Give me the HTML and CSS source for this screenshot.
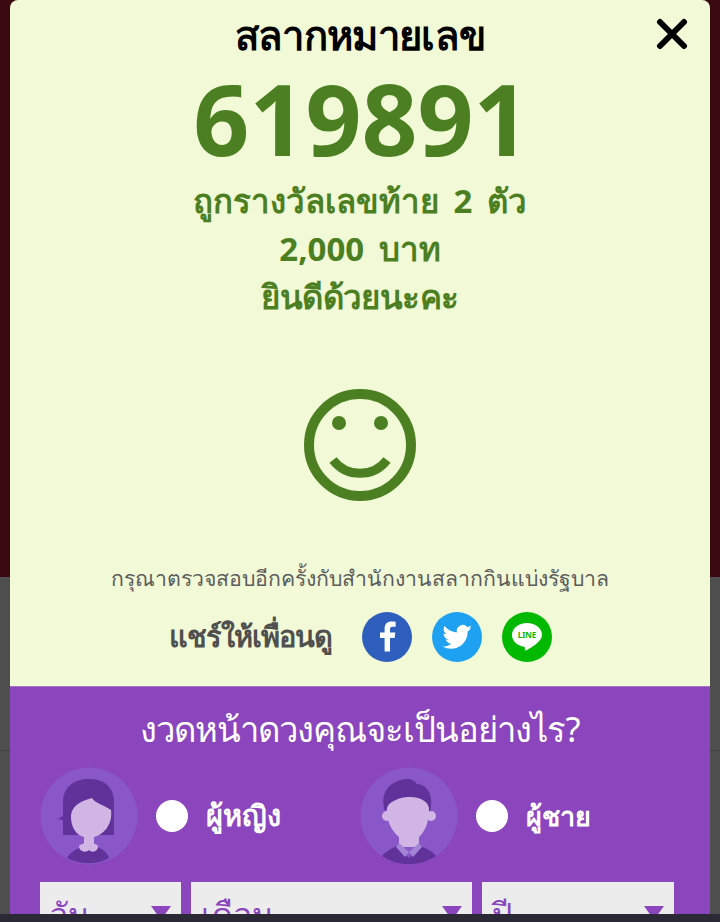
FILE: index.html
```html
<html>
  <head>
    <title>สลากหมายเลข</title>
    <meta charset="utf-8">
    <link rel="stylesheet" href="styles.css">
  </head>
  <body>
    <div class="backdrop">
      <div class="back-top"></div>
      <div class="back-mid"></div>
      <div class="back-low"></div>
    </div>

    <section class="modal">
      <div class="result">
        <button class="close">
          <svg viewBox="0 0 32 32" width="32" height="32" fill="none" stroke="#000" stroke-width="6" stroke-linecap="round">
            <path d="M4 4 28 28M28 4 4 28" />
          </svg>
        </button>
        <h1 class="title">สลากหมายเลข</h1>
        <div class="number">619891</div>
        <p class="prize">ถูกรางวัลเลขท้าย 2 ตัว</p>
        <p class="prize">2,000 บาท</p>
        <p class="prize tight">ยินดีด้วยนะคะ</p>
        <svg class="smile" viewBox="0 0 112 112" width="112" height="112">
          <circle cx="56" cy="56" r="51" fill="none" stroke="#4c7f21" stroke-width="10" />
          <circle cx="35" cy="34" r="7" fill="#4c7f21" />
          <circle cx="77" cy="34" r="7" fill="#4c7f21" />
          <path d="M29 71A34 34 0 0 0 83 71" fill="none" stroke="#4c7f21" stroke-width="9" />
        </svg>
        <p class="note">กรุณาตรวจสอบอีกครั้งกับสำนักงานสลากกินแบ่งรัฐบาล</p>
        <div class="share">
          <span class="share-label">แชร์ให้เพื่อนดู</span>
          <svg viewBox="0 0 50 50" width="50" height="50">
            <circle cx="25" cy="25" r="25" fill="#2f5fbd" />
            <path d="M28 39.500V26h4.600l.7-5.500H28v-3.100c0-1.600.5-2.700 2.800-2.700h2.800V9.800c-.6-.1-2.200-.3-4.100-.3-4.100 0-6.900 2.500-6.900 7.100v3.900h-4.600V26h4.600v13.500z" fill="#fff" />
          </svg>
          <svg viewBox="0 0 50 50" width="50" height="50">
            <circle cx="25" cy="25" r="25" fill="#1ea1f1" />
            <path d="M40 15.800c-1.100.5-2.200.8-3.500.9 1.300-.7 2.200-1.900 2.700-3.300-1.200.7-2.500 1.200-3.900 1.500a6.100 6.100 0 0 0-10.400 5.500C20 20.100 15.500 17.700 12.500 14c-1.600 2.800-.8 6.300 1.900 8.100-1 0-2-.3-2.800-.7 0 3 2 5.500 4.900 6-.9.300-1.900.3-2.800.1.800 2.500 3.100 4.200 5.700 4.300-2.600 2-5.800 2.900-9 2.500 9.100 5.700 22.100 1.400 24.800-10.500.3-1.400.4-2.800.4-4.200 1.300-.8 1.900-1.800 3.400-3.300z" fill="#fff" />
          </svg>
          <svg viewBox="0 0 50 50" width="50" height="50">
            <circle cx="25" cy="25" r="25" fill="#00b900" />
            <path d="M25 11C16.700 11 10 16.300 10 23c0 5.900 5.200 10.800 12.300 11.800 1 .2.400 2 .6 3.200.2 1 1.200.5 2 .1C28.700 36 40 29.500 40 23 40 16.300 33.300 11 25 11z" fill="#fff" />
            <text x="25" y="25.800" class="line-word">LINE</text>
          </svg>
        </div>
      </div>

      <div class="fortune">
        <h2 class="ask">งวดหน้าดวงคุณจะเป็นอย่างไร?</h2>
        <div class="genders">
          <label class="gender">
            <svg class="avatar" viewBox="0 0 98 98" width="98" height="98">
              <circle cx="49" cy="49" r="48.500" fill="#8a57c9" />
              <path d="M23 68V35C23 20 34 12 49 12S74 20 74 35V68z" fill="#60329a" />
              <path d="M23 49 18 52 23 53z" fill="#60329a" />
              <path d="M31 50C31 42 36 35 52 31 55 36 62 37 71 43 73 58 63 68 54 70V78H44V70C36 68 31 60 31 50z" fill="#d1b6e5" />
              <path d="M27 91C30 85 38 81 44 79H54C62 81 67 85 69 91 58 98 40 98 27 91z" fill="#60329a" />
              <path d="M39 79C42 75 56 75 58 79 58 85 52 86 49 83 46 86 39 85 39 79z" fill="#d1b6e5" />
            </svg>
            <span class="radio"></span>
            <span class="gender-name female">ผู้หญิง</span>
          </label>
          <label class="gender">
            <svg class="avatar" viewBox="0 0 98 98" width="98" height="98">
              <circle cx="49" cy="49" r="48.500" fill="#8a57c9" />
              <path d="M25 44C19 26 30 13 47 12 52 12 55 14 57 17 68 18 74 28 70 46L62 34H34z" fill="#60329a" />
              <circle cx="27" cy="49" r="5" fill="#d1b6e5" />
              <circle cx="71" cy="49" r="5" fill="#d1b6e5" />
              <path d="M27 42C27 36 38 30 50 30 62 30 69 36 69 42 69 56 65 64 59 70V80H39V70C32 64 27 56 27 42z" fill="#d1b6e5" />
              <path d="M22 89C26 84 32 81 37 79L49 91 60 79C66 81 72 84 76 89 60 100 38 100 22 89z" fill="#60329a" />
              <path d="M36 80 39 76 49 85 59 76 62 80 53 90 49 85 45 90z" fill="#a283d6" />
            </svg>
            <span class="radio"></span>
            <span class="gender-name">ผู้ชาย</span>
          </label>
        </div>
        <div class="selects">
          <div class="select day"><span>วัน</span><i class="arrow"></i></div>
          <div class="select month"><span>เดือน</span><i class="arrow"></i></div>
          <div class="select year"><span>ปี</span><i class="arrow"></i></div>
        </div>
      </div>
    </section>

    <div class="navbar"></div>
  </body>
</html>
```

FILE: styles.css
```css
html, body { margin: 0; padding: 0; height: 922px; overflow: hidden; }
body { position: relative; font-family: "Noto Sans", "DejaVu Sans", sans-serif; }
h1, h2, p { margin: 0; font-weight: inherit; }

.backdrop { height: 100%; display: flex; flex-direction: column; }
.back-top { height: 577px; background-color: #3a0a10; }
.back-mid { height: 173px; background-color: #4e4e4e; border-bottom: 1px solid #444; }
.back-low { flex: 1; background-color: #4e4e4e; }

.modal {
  position: absolute;
  top: 0;
  left: 10px;
  width: 700px;
  height: 914px;
  overflow: hidden;
  border-radius: 8px 8px 0 0;
}

.result {
  position: relative;
  height: 686px;
  box-sizing: border-box;
  padding-top: 10px;
  background-color: #f1f9d6;
  display: flex;
  flex-direction: column;
  align-items: center;
}
.close {
  position: absolute;
  top: 18px;
  right: 22px;
  padding: 0;
  border: 0;
  background: none;
  line-height: 0;
}
.title { font-size: 40px; line-height: 50px; font-weight: 700; color: #000; letter-spacing: -0.65px; }
.number { font-size: 98px; line-height: 110px; font-weight: 700; color: #4c7f21; margin: 3px 0 4px 3px; }
.prize { font-size: 33px; line-height: 48px; font-weight: 700; color: #4c7f21; word-spacing: 6px; }
.tight { letter-spacing: -0.6px; }
.smile { margin-top: 68px; }
.note { margin-top: 62px; font-size: 21.25px; line-height: 30px; color: #5c5c5c; }
.share { display: flex; align-items: center; gap: 20px; margin-top: 19px; }
.share-label { font-size: 29px; font-weight: 700; color: #4f4f4f; margin-right: 10px; letter-spacing: -1px; }
.line-word { font-size: 8px; font-weight: 700; fill: #00b900; text-anchor: middle; }

.fortune {
  height: 228px;
  box-sizing: border-box;
  padding: 20px 30px 0;
  background-color: #8b45bd;
  border-top: 1px solid #a673c8;
  color: #fff;
}
.ask { font-size: 34.6px; line-height: 44px; text-align: center; letter-spacing: -1px; }
.genders { display: flex; margin-top: 16px; }
.gender { width: 320px; display: flex; align-items: center; }
.avatar { flex-shrink: 0; }
.radio { width: 32px; height: 32px; border-radius: 50%; background-color: #fff; margin: 0 18px; }
.gender-name { font-size: 27px; font-weight: 700; }
.female { font-size: 29px; }

.selects { display: flex; gap: 10px; margin-top: 17px; }
.select {
  height: 60px;
  box-sizing: border-box;
  padding: 12px 10px;
  background: linear-gradient(#ececec 55%, #d4d4d4 100%);
  color: #8b45bd;
  font-size: 32px;
  line-height: 40px;
  position: relative;
}
.day { width: 141px; }
.month { width: 281px; }
.year { width: 192px; }
.arrow {
  position: absolute;
  top: 24px;
  right: 10px;
  border-top: 14px solid #8b45bd;
  border-left: 10px solid transparent;
  border-right: 10px solid transparent;
}

.navbar { position: absolute; left: 0; right: 0; bottom: 0; height: 8px; background-color: #2b2935; }
```
